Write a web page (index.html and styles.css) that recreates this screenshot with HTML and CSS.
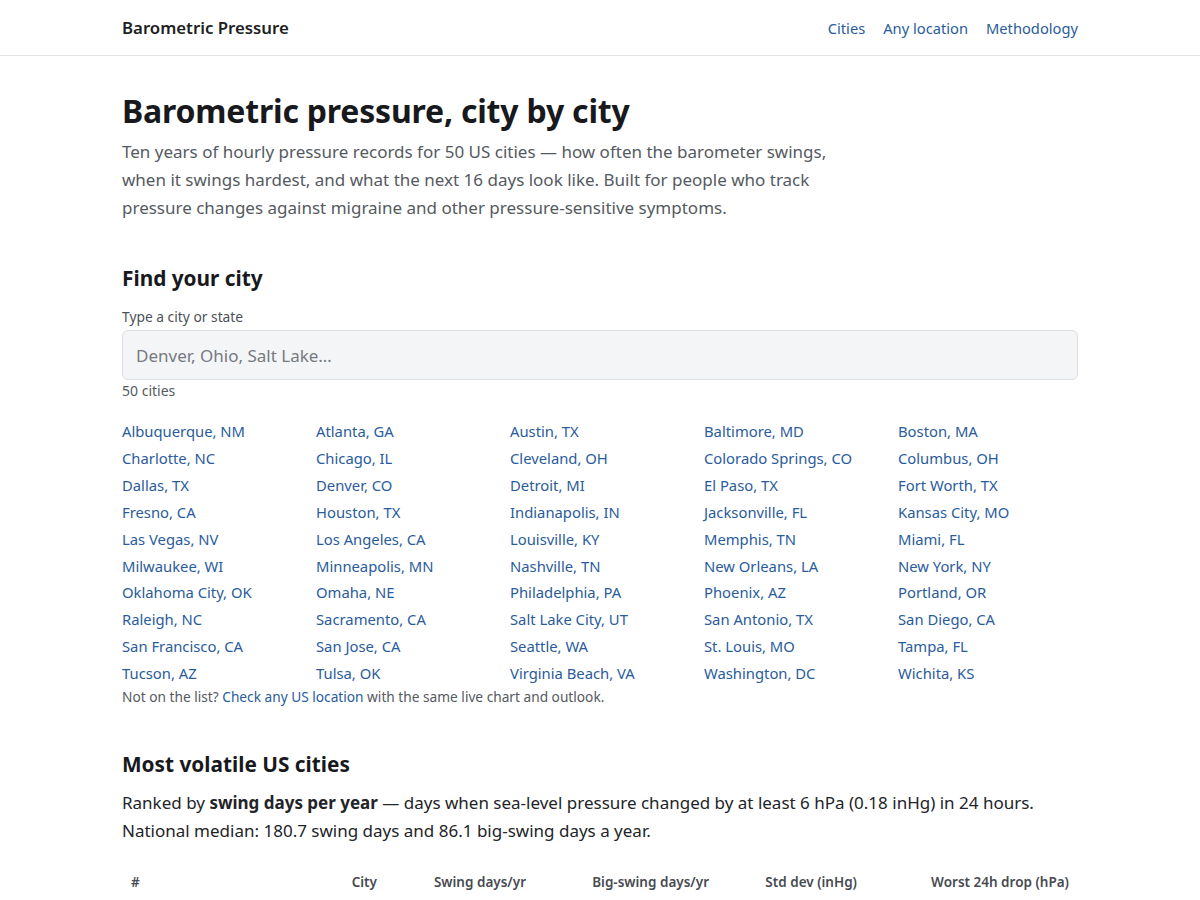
FILE: index.html
```html
<!DOCTYPE html>
<html lang="en">
<head>
<meta charset="utf-8">
<title>Barometric Pressure</title>
<link rel="stylesheet" href="styles.css">
</head>
<body>
<header class="topbar">
  <div class="wrap topbar-inner">
    <a class="brand" href="#">Barometric Pressure</a>
    <nav class="nav">
      <a href="#">Cities</a>
      <a href="#">Any location</a>
      <a href="#">Methodology</a>
    </nav>
  </div>
</header>
<main class="wrap main">
  <h1 class="title">Barometric pressure, city by city</h1>
  <p class="lead">Ten years of hourly pressure records for 50 US cities — how often the barometer swings, when it swings hardest, and what the next 16 days look like. Built for people who track pressure changes against migraine and other pressure-sensitive symptoms.</p>

  <section class="find">
    <h2 class="h2">Find your city</h2>
    <label class="label" for="q">Type a city or state</label>
    <input id="q" class="search" type="text" placeholder="Denver, Ohio, Salt Lake…">
    <div class="count">50 cities</div>
    <ul class="cities">
      <li><a href="#">Albuquerque, NM</a></li>
      <li><a href="#">Atlanta, GA</a></li>
      <li><a href="#">Austin, TX</a></li>
      <li><a href="#">Baltimore, MD</a></li>
      <li><a href="#">Boston, MA</a></li>
      <li><a href="#">Charlotte, NC</a></li>
      <li><a href="#">Chicago, IL</a></li>
      <li><a href="#">Cleveland, OH</a></li>
      <li><a href="#">Colorado Springs, CO</a></li>
      <li><a href="#">Columbus, OH</a></li>
      <li><a href="#">Dallas, TX</a></li>
      <li><a href="#">Denver, CO</a></li>
      <li><a href="#">Detroit, MI</a></li>
      <li><a href="#">El Paso, TX</a></li>
      <li><a href="#">Fort Worth, TX</a></li>
      <li><a href="#">Fresno, CA</a></li>
      <li><a href="#">Houston, TX</a></li>
      <li><a href="#">Indianapolis, IN</a></li>
      <li><a href="#">Jacksonville, FL</a></li>
      <li><a href="#">Kansas City, MO</a></li>
      <li><a href="#">Las Vegas, NV</a></li>
      <li><a href="#">Los Angeles, CA</a></li>
      <li><a href="#">Louisville, KY</a></li>
      <li><a href="#">Memphis, TN</a></li>
      <li><a href="#">Miami, FL</a></li>
      <li><a href="#">Milwaukee, WI</a></li>
      <li><a href="#">Minneapolis, MN</a></li>
      <li><a href="#">Nashville, TN</a></li>
      <li><a href="#">New Orleans, LA</a></li>
      <li><a href="#">New York, NY</a></li>
      <li><a href="#">Oklahoma City, OK</a></li>
      <li><a href="#">Omaha, NE</a></li>
      <li><a href="#">Philadelphia, PA</a></li>
      <li><a href="#">Phoenix, AZ</a></li>
      <li><a href="#">Portland, OR</a></li>
      <li><a href="#">Raleigh, NC</a></li>
      <li><a href="#">Sacramento, CA</a></li>
      <li><a href="#">Salt Lake City, UT</a></li>
      <li><a href="#">San Antonio, TX</a></li>
      <li><a href="#">San Diego, CA</a></li>
      <li><a href="#">San Francisco, CA</a></li>
      <li><a href="#">San Jose, CA</a></li>
      <li><a href="#">Seattle, WA</a></li>
      <li><a href="#">St. Louis, MO</a></li>
      <li><a href="#">Tampa, FL</a></li>
      <li><a href="#">Tucson, AZ</a></li>
      <li><a href="#">Tulsa, OK</a></li>
      <li><a href="#">Virginia Beach, VA</a></li>
      <li><a href="#">Washington, DC</a></li>
      <li><a href="#">Wichita, KS</a></li>
    </ul>
    <p class="note">Not on the list? <a href="#">Check any US location</a> with the same live chart and outlook.</p>
  </section>

  <section class="volatile">
    <h2 class="h2">Most volatile US cities</h2>
    <p class="body">Ranked by <strong>swing days per year</strong> — days when sea-level pressure changed by at least 6 hPa (0.18 inHg) in 24 hours. National median: 180.7 swing days and 86.1 big-swing days a year.</p>
    <table class="rank">
      <colgroup>
        <col class="c-rank"><col class="c-city"><col class="c-swing"><col class="c-big"><col class="c-std"><col class="c-drop">
      </colgroup>
      <thead>
        <tr>
          <th class="left">#</th>
          <th>City</th>
          <th>Swing days/yr</th>
          <th>Big-swing days/yr</th>
          <th>Std dev (inHg)</th>
          <th>Worst 24h drop (hPa)</th>
        </tr>
      </thead>
    </table>
  </section>
</main>
</body>
</html>
```

FILE: styles.css
```css
* { box-sizing: border-box; }
html, body { margin: 0; padding: 0; }
body {
  font-family: "Noto Sans", "Open Sans", sans-serif;
  color: #222428;
  background: #fff;
}
a { color: #2a5c9c; text-decoration: none; }
.wrap { width: 956px; margin: 0 auto; }

.topbar { border-bottom: 1px solid #e2e3e6; height: 56px; }
.topbar-inner {
  height: 55px;
  display: flex;
  align-items: center;
  justify-content: space-between;
}
.brand { font-size: 16.8px; font-weight: 600; color: #1d1e22; }
.nav { display: flex; gap: 18px; font-size: 14.7px; }

.main { padding-top: 34px; padding-bottom: 40px; }
.title {
  margin: 0;
  font-size: 32px;
  line-height: 41px;
  font-weight: 700;
  color: #18191d;
  letter-spacing: -0.2px;
}
.lead {
  margin: 7px 0 0;
  max-width: 720px;
  font-size: 17px;
  line-height: 28px;
  color: #555a61;
}

.find { margin-top: 42px; }
.h2 {
  margin: 0;
  font-size: 20.8px;
  line-height: 28px;
  font-weight: 700;
  color: #18191d;
}
.label {
  display: block;
  margin-top: 15px;
  font-size: 13.8px;
  line-height: 20px;
  color: #4c5157;
}
.search {
  display: block;
  width: 100%;
  height: 50px;
  margin-top: 3px;
  padding: 0 13px;
  font-family: inherit;
  font-size: 17px;
  color: #222;
  background: #f4f5f7;
  border: 1px solid #dcdee2;
  border-radius: 6px;
  outline: none;
}
.search::placeholder { color: #767a80; }
.count {
  margin-top: 1px;
  font-size: 14px;
  line-height: 20px;
  color: #555a61;
}
.cities {
  list-style: none;
  margin: 17px 0 0;
  padding: 0;
  display: grid;
  grid-template-columns: repeat(5, 1fr);
  column-gap: 14px;
}
.cities li { font-size: 14.8px; line-height: 26.9px; white-space: nowrap; }
.note {
  margin: 0;
  font-size: 13.7px;
  line-height: 20px;
  color: #555a61;
}

.volatile { margin-top: 43px; }
.body {
  margin: 11px 0 0;
  font-size: 17px;
  line-height: 28px;
  color: #222428;
}
.body strong { font-weight: 700; }

.rank {
  width: 100%;
  margin-top: 21px;
  border-collapse: collapse;
  table-layout: fixed;
}
.c-rank { width: 180px; }
.c-city { width: 84px; }
.c-swing { width: 149px; }
.c-big { width: 183px; }
.c-std { width: 148px; }
.c-drop { width: 212px; }
.rank th {
  padding: 6px 9px 8px;
  font-size: 13.5px;
  line-height: 20px;
  font-weight: 600;
  color: #474b52;
  text-align: right;
  white-space: nowrap;
}
.rank th.left { text-align: left; }
```
